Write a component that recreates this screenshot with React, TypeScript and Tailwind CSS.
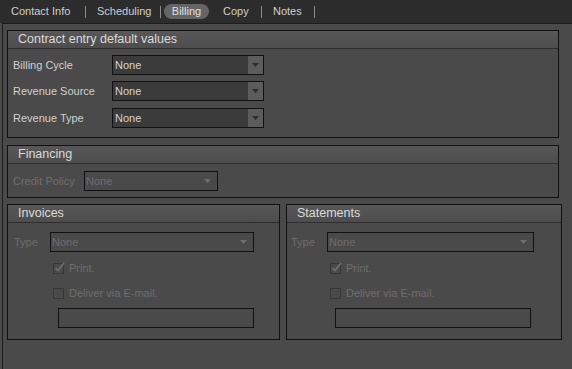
import React from 'react';

const FONT = { fontFamily: '"Liberation Sans", Arial, sans-serif' };

const Arrow = ({ color }: { color: string }) => (
  <svg width="7" height="4" viewBox="0 0 7 4">
    <path d="M0 0 H7 L3.5 4 Z" fill={color} />
  </svg>
);

const Select = ({ width, disabled }: { width: number; disabled?: boolean }) =>
  disabled ? (
    <div
      className="h-[20px] border border-[#111] flex items-center justify-between pl-[1px] pr-[6px] text-[11px] text-[#6d6d6d]"
      style={{ width }}
    >
      <span>None</span>
      <Arrow color="#6d6d6d" />
    </div>
  ) : (
    <div className="h-[20px] border border-[#111] flex" style={{ width }}>
      <div className="flex-1 bg-[#3b3b3b] flex items-center pl-[2px] text-[11px] text-[#d4d4d4]">None</div>
      <div className="w-[15px] bg-[#5c5c5c] flex items-center justify-center">
        <Arrow color="#2e2e2e" />
      </div>
    </div>
  );

const GroupBox = ({
  title,
  className,
  children,
}: {
  title: string;
  className: string;
  children: React.ReactNode;
}) => (
  <div className={`border border-[#111] flex flex-col ${className}`}>
    <div className="h-[18px] shrink-0 border-b border-[#2f2f2f] bg-gradient-to-b from-[#575757] to-[#4d4d4d] flex items-center pl-[10px] text-[12.5px] text-[#dadada]">
      {title}
    </div>
    {children}
  </div>
);

const Check = ({ checked, label }: { checked?: boolean; label: string }) => (
  <div className="flex items-center gap-[5px] h-[11px] text-[11px] text-[#6d6d6d]">
    <div className="relative w-[11px] h-[11px] border border-[#383838]">
      {checked && (
        <svg className="absolute -top-[2px] left-[0px]" width="11" height="11" viewBox="0 0 11 11">
          <path d="M1.5 6 L4 8.5 L10 1" stroke="#707070" strokeWidth="1.7" fill="none" />
        </svg>
      )}
    </div>
    <span>{label}</span>
  </div>
);

const DeliveryBox = ({
  title,
  className,
  labelPad,
  selectW,
  checkIndent,
  boxIndent,
}: {
  title: string;
  className: string;
  labelPad: number;
  selectW: number;
  checkIndent: number;
  boxIndent: number;
}) => (
  <GroupBox title={title} className={className}>
    <div className="flex flex-col pt-[9px]">
      <div className="flex items-center" style={{ paddingLeft: labelPad }}>
        <span className="w-[36px] text-[11px] text-[#6d6d6d]">Type</span>
        <Select width={selectW} disabled />
      </div>
      <div className="flex flex-col gap-[14px] mt-[11px]" style={{ paddingLeft: checkIndent }}>
        <Check checked label="Print." />
        <Check label="Deliver via E-mail." />
      </div>
      <div className="mt-[9px] h-[20px] w-[196px] border border-[#111]" style={{ marginLeft: boxIndent }} />
    </div>
  </GroupBox>
);

const Sep = () => <span className="w-px h-[12px] bg-[#8a8a8a]" />;

export default function App() {
  return (
    <div className="w-[572px] h-[369px] bg-[#4a4a4a] flex flex-col overflow-hidden" style={FONT}>
      {/* Tabs */}
      <div className="h-[23px] shrink-0 bg-[#2c2c2c] flex items-center pl-[11px] text-[11px] text-[#cfcfcf]">
        <span className="w-[74px]">Contact Info</span>
        <Sep />
        <span className="w-[63px] ml-[11px]">Scheduling</span>
        <Sep />
        <span className="w-[45px] h-[15px] ml-[3px] rounded-full bg-[#656565] flex items-center justify-center text-[#e0e0e0]">
          Billing
        </span>
        <span className="ml-[3px]"><Sep /></span>
        <span className="w-[38px] ml-[11px]">Copy</span>
        <Sep />
        <span className="w-[41px] ml-[11px]">Notes</span>
        <Sep />
      </div>

      {/* Panel */}
      <div className="flex-1 ml-[2px] border-l border-t border-[#1c1c1c] pl-[4px] pt-[6px] flex flex-col">
        <GroupBox title="Contract entry default values" className="w-[552px] h-[108px]">
          <div className="flex flex-col pt-[6px] pl-[5px] text-[11px] text-[#d0d0d0]">
            {['Billing Cycle', 'Revenue Source', 'Revenue Type'].map((l, i) => (
              <div key={l} className={`flex items-center ${i === 1 ? 'mt-[6px]' : i === 2 ? 'mt-[7px]' : ''}`}>
                <span className="w-[99px]">{l}</span>
                <Select width={152} />
              </div>
            ))}
          </div>
        </GroupBox>

        <GroupBox title="Financing" className="w-[552px] h-[53px] mt-[7px]">
          <div className="flex items-center pt-[7px] pl-[5px]">
            <span className="w-[71px] text-[11px] text-[#6d6d6d]">Credit Policy</span>
            <Select width={134} disabled />
          </div>
        </GroupBox>

        <div className="flex gap-[6px] mt-[6px]">
          <DeliveryBox title="Invoices" className="w-[273px] h-[136px]" labelPad={6} selectW={204} checkIndent={45} boxIndent={50} />
          <DeliveryBox title="Statements" className="w-[276px] h-[136px]" labelPad={4} selectW={207} checkIndent={43} boxIndent={48} />
        </div>
      </div>
    </div>
  );
}
